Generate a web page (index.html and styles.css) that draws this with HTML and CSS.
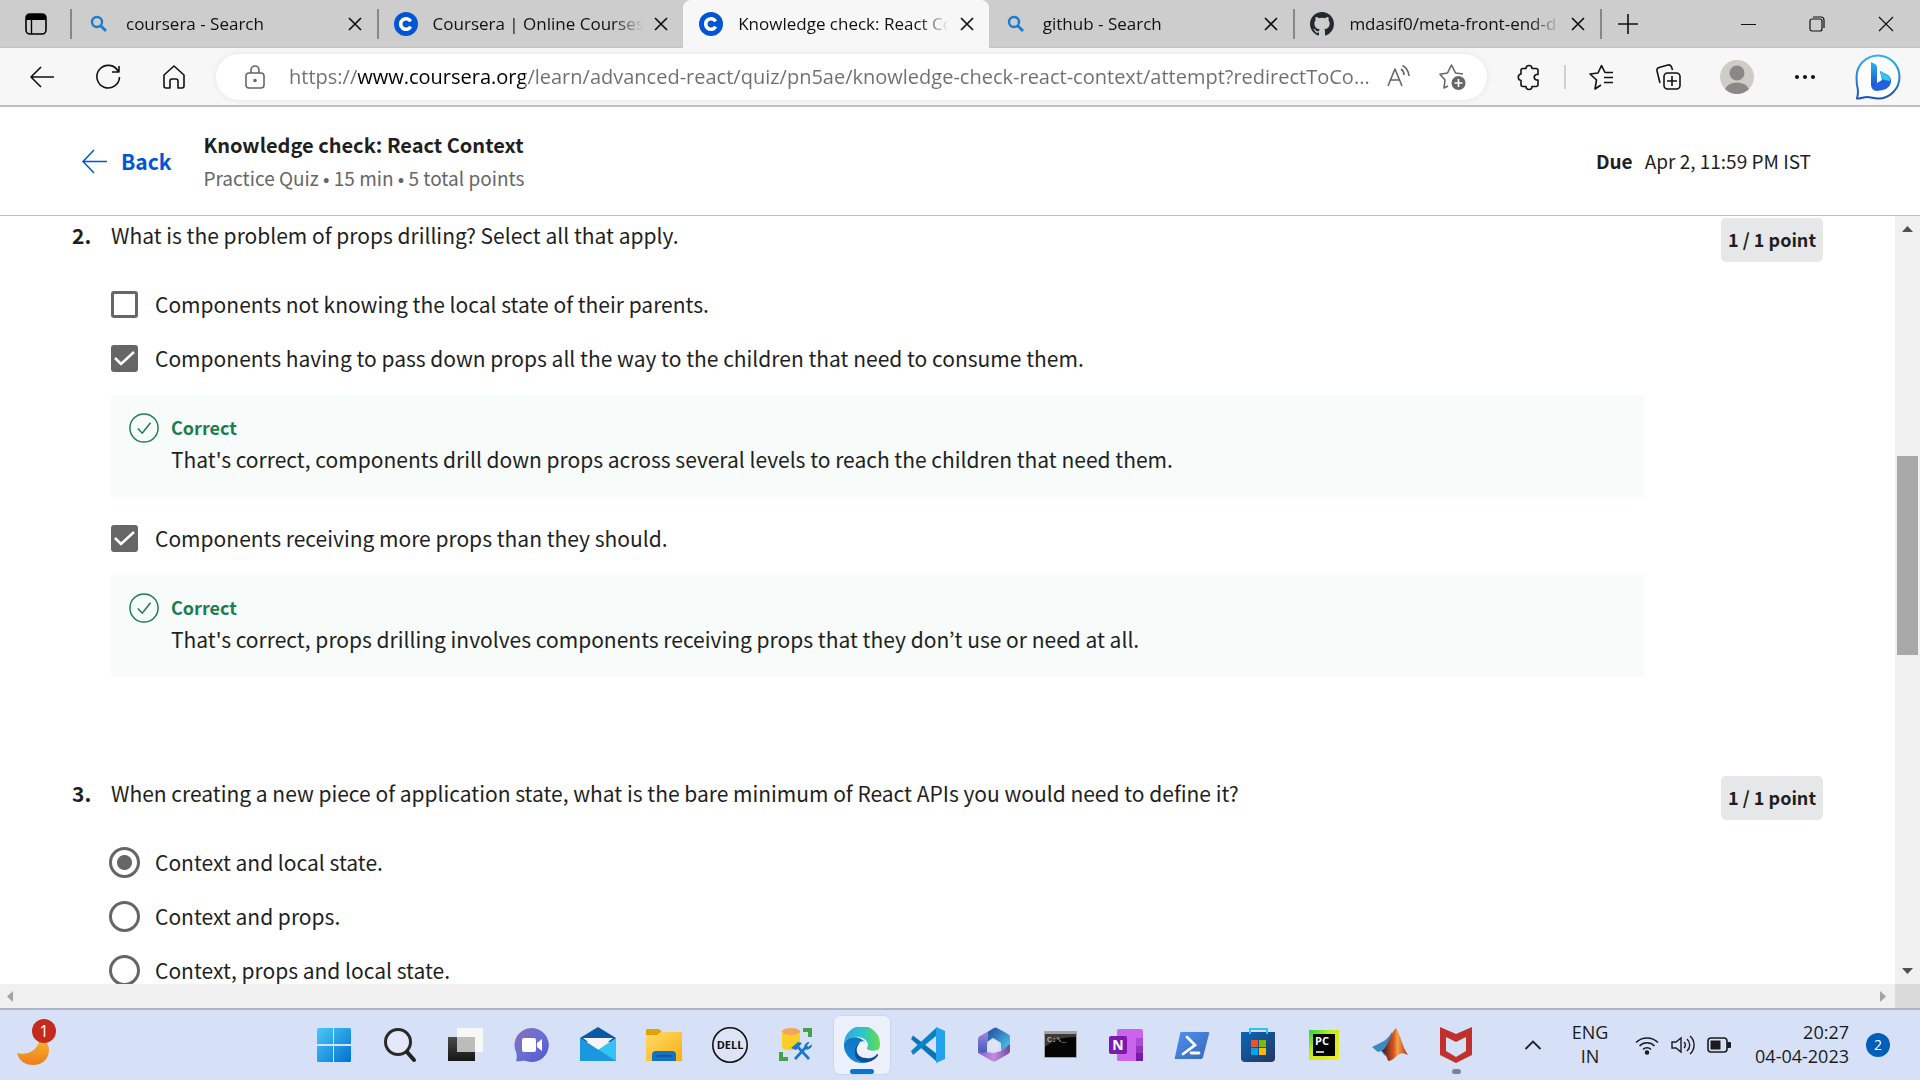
FILE: index.html
```html
<!DOCTYPE html>
<html lang="en">
<head>
<meta charset="utf-8">
<title>Knowledge check: React Context</title>
<link rel="stylesheet" href="styles.css">
</head>
<body>
<svg class="defs" aria-hidden="true">
  <defs>
    <symbol id="close" viewBox="0 0 14 14"><path d="M1 1l12 12M13 1L1 13" fill="none" stroke="#111" stroke-width="1.7"/></symbol>
    <symbol id="lens" viewBox="0 0 18 18"><circle cx="7" cy="7" r="5" fill="none" stroke="#1b7cd0" stroke-width="2.4"/><path d="M10.5 10.5L16 16" stroke="#1b7cd0" stroke-width="2.8"/></symbol>
    <symbol id="coursera" viewBox="0 0 24 24"><circle cx="12" cy="12" r="12" fill="#0056d2"/><path d="M16.6 9.4A5.3 5.3 0 1 0 16.6 14.6" fill="none" stroke="#fff" stroke-width="3.6"/></symbol>
    <symbol id="tick" viewBox="0 0 29 29"><circle cx="14.500" cy="14.500" r="13.600" fill="none" stroke="#1d7c50" stroke-width="1.400"/><path d="M8.500 15l4.300 4.500 8-10" fill="none" stroke="#1d7c50" stroke-width="1.500"/></symbol>
    <linearGradient id="gwin" x1="0" y1="0" x2="1" y2="1"><stop offset="0" stop-color="#4cc8fb"/><stop offset="1" stop-color="#0072cf"/></linearGradient>
    <linearGradient id="gmoon" x1="0" y1="0" x2="0" y2="1"><stop offset="0" stop-color="#f5b82e"/><stop offset="1" stop-color="#ef7d1a"/></linearGradient>
    <linearGradient id="gchat" x1="0" y1="0" x2="1" y2="1"><stop offset="0" stop-color="#8d6bb5"/><stop offset=".5" stop-color="#6a6fd6"/><stop offset="1" stop-color="#5058c8"/></linearGradient>
    <linearGradient id="gbing" x1="0" y1="0" x2="0" y2="1"><stop offset="0" stop-color="#2ab5ee"/><stop offset="1" stop-color="#1b50c8"/></linearGradient>
    <linearGradient id="gfold" x1="0" y1="0" x2="1" y2="1"><stop offset="0" stop-color="#ffdc6a"/><stop offset="1" stop-color="#f8ae10"/></linearGradient>
    <linearGradient id="gedge1" x1="0" y1="0" x2="1" y2="0"><stop offset="0" stop-color="#2da8e6"/><stop offset=".5" stop-color="#2cc4cc"/><stop offset="1" stop-color="#62dd4c"/></linearGradient>
    <linearGradient id="gedge2" x1="0" y1="0" x2="0" y2="1"><stop offset="0" stop-color="#1275c0"/><stop offset="1" stop-color="#0f8be0"/></linearGradient>
    <linearGradient id="gstore" x1="0" y1="0" x2="1" y2="1"><stop offset="0" stop-color="#0a67ba"/><stop offset="1" stop-color="#23375e"/></linearGradient>
    <linearGradient id="gpc" x1="0" y1="0" x2="1" y2="1"><stop offset="0" stop-color="#20d54c"/><stop offset=".4" stop-color="#c5e81c"/><stop offset="1" stop-color="#f2ea2a"/></linearGradient>
    <linearGradient id="gps" x1="0" y1="0" x2="1" y2="1"><stop offset="0" stop-color="#5190f5"/><stop offset="1" stop-color="#3567b8"/></linearGradient>
    <linearGradient id="gmat" x1="0" y1="0" x2="1" y2="0"><stop offset="0" stop-color="#3a1520"/><stop offset=".45" stop-color="#d9581e"/><stop offset=".6" stop-color="#f7a24c"/><stop offset="1" stop-color="#b0301c"/></linearGradient>
    <linearGradient id="gtask" x1="0" y1="0" x2="0" y2="1"><stop offset="0" stop-color="#4a4a4a"/><stop offset="1" stop-color="#151515"/></linearGradient>
    <linearGradient id="goff1" x1="0" y1="0" x2="0" y2="1"><stop offset="0" stop-color="#b98ae6"/><stop offset="1" stop-color="#2a56b0"/></linearGradient>
    <linearGradient id="goff2" x1="0" y1="0" x2="1" y2="1"><stop offset="0" stop-color="#1f4a9c"/><stop offset="1" stop-color="#4fd0f2"/></linearGradient>
    <linearGradient id="goff3" x1="0" y1="0" x2="1" y2="0"><stop offset="0" stop-color="#7f62c8"/><stop offset=".5" stop-color="#c88ae2"/><stop offset="1" stop-color="#6e4aa2"/></linearGradient>
  </defs>
</svg>

<header class="tabstrip">
  <button class="tab-menu" aria-label="Tab actions"><svg width="22" height="26" viewBox="0 0 22 26"><rect x="1" y="3" width="20" height="20" rx="4" fill="none" stroke="#000" stroke-width="1.600"/><path d="M1 9V7a4 4 0 0 1 4-4h12a4 4 0 0 1 4 4v2z"/><path d="M6.500 8v15" stroke="#000" stroke-width="1.400"/></svg></button>
  <nav class="tabs" aria-label="Tabs">
    <div class="tab"><svg class="fav"><use href="#lens" x="3" y="3" width="18" height="18"/></svg><a class="tab-title" href="#t1">coursera - Search</a><button class="tab-close" aria-label="Close tab"><svg><use href="#close"/></svg></button></div>
    <div class="tab"><svg class="fav"><use href="#coursera"/></svg><a class="tab-title" href="#t2">Coursera | Online Courses</a><button class="tab-close" aria-label="Close tab"><svg><use href="#close"/></svg></button></div>
    <div class="tab active"><svg class="fav"><use href="#coursera"/></svg><a class="tab-title" href="#t3">Knowledge check: React Context</a><button class="tab-close" aria-label="Close tab"><svg><use href="#close"/></svg></button></div>
    <div class="tab"><svg class="fav"><use href="#lens" x="3" y="3" width="18" height="18"/></svg><a class="tab-title" href="#t4">github - Search</a><button class="tab-close" aria-label="Close tab"><svg><use href="#close"/></svg></button></div>
    <div class="tab"><svg class="fav" viewBox="0 0 16 16"><path fill="#24292f" d="M8 0C3.580 0 0 3.580 0 8c0 3.540 2.290 6.530 5.470 7.590.4.070.550-.170.550-.380 0-.190-.010-.820-.010-1.490-2.010.370-2.530-.490-2.690-.940-.090-.230-.480-.940-.820-1.130-.280-.150-.680-.520-.010-.530.630-.010 1.080.580 1.230.820.720 1.210 1.870.870 2.330.660.070-.520.280-.870.510-1.070-1.780-.2-3.640-.890-3.640-3.950 0-.870.310-1.590.820-2.150-.080-.2-.360-1.020.080-2.120 0 0 .670-.210 2.200.820a7.600 7.600 0 0 1 4 0c1.530-1.040 2.200-.820 2.200-.820.440 1.100.160 1.920.080 2.120.510.560.820 1.270.820 2.150 0 3.070-1.870 3.750-3.650 3.950.290.250.540.730.540 1.480 0 1.070-.010 1.930-.010 2.200 0 .210.150.460.550.380A8 8 0 0 0 16 8c0-4.420-3.580-8-8-8z"/></svg><a class="tab-title" href="#t5">mdasif0/meta-front-end-d</a><button class="tab-close" aria-label="Close tab"><svg><use href="#close"/></svg></button></div>
  </nav>
  <button class="new-tab" aria-label="New tab"><svg width="22" height="22" viewBox="0 0 22 22"><path d="M11 1v20M1 11h20" stroke="#111" stroke-width="1.600"/></svg></button>
  <div class="window-buttons">
    <button aria-label="Minimize"><svg width="16" height="16" viewBox="0 0 16 16"><path d="M1 8.500h15" stroke="#111"/></svg></button>
    <button aria-label="Restore"><svg width="16" height="16" viewBox="0 0 16 16" fill="none" stroke="#111" stroke-width="1.200"><rect x="1" y="3" width="12" height="12" rx="2"/><path d="M4 1h8a3 3 0 0 1 3 3v8"/></svg></button>
    <button aria-label="Close"><svg width="16" height="16" viewBox="0 0 16 16"><path d="M1 1l14 14M15 1L1 15" stroke="#111" stroke-width="1.200"/></svg></button>
  </div>
</header>

<div class="toolbar">
  <div class="nav-buttons">
    <button aria-label="Go back"><svg width="28" height="28" viewBox="0 0 28 28"><path d="M26 14H3M13 4L3 14l10 10"/></svg></button>
    <button aria-label="Refresh"><svg width="28" height="28" viewBox="0 0 28 28"><path d="M24 8A11.300 11.300 0 1 0 25.500 14M25 3v6h-7"/></svg></button>
    <button aria-label="Home"><svg width="28" height="28" viewBox="0 0 28 28"><path d="M14 3L4 12v11a2 2 0 0 0 2 2h4v-7a2 2 0 0 1 2-2h4a2 2 0 0 1 2 2v7h4a2 2 0 0 0 2-2V12z"/></svg></button>
  </div>
  <form class="omnibox">
    <button type="button" aria-label="Site information"><svg width="24" height="28" viewBox="0 0 24 28" class="gray"><rect x="3" y="10" width="18" height="15" rx="3"/><path d="M8 10V7a4 4 0 0 1 8 0v3"/><circle cx="12" cy="17.500" r="1" fill="#666"/></svg></button>
    <input class="url" type="text" aria-label="Address bar" value="https://www.coursera.org/learn/advanced-react/quiz/pn5ae/knowledge-check-react-context/attempt?redirectToCo...">
    <button type="button" aria-label="Read aloud"><svg width="28" height="28" viewBox="0 0 28 28" class="gray"><path d="M4 23L11 6l7 17M6.500 17h9"/><path d="M17 6a7 7 0 0 1 3 6M18.500 2.500A13 13 0 0 1 25 13"/></svg></button>
    <button type="button" aria-label="Add to favorites"><svg width="30" height="30" viewBox="0 0 30 30" class="gray"><path d="M11 24l-4 2 1-8-5-5.800 7.500-1.200 4-8 4 8 7.500 1"/><circle cx="21.500" cy="21" r="7" fill="#666" stroke="none"/><path d="M21.500 17v8M17.500 21h8" stroke="#fff"/></svg></button>
  </form>
  <div class="tools">
    <button aria-label="Extensions"><svg width="28" height="28" viewBox="0 0 28 28"><path d="M8 5.500h3a3 3 0 0 1 6 0h4a2 2 0 0 1 2 2v4h-1.500a2.800 2.800 0 0 0 0 5.500H23v4.500a2 2 0 0 1-2 2h-4a3 3 0 0 1-6 0H8a2 2 0 0 1-2-2v-4a3.300 3.300 0 0 1 0-6.500V7.500a2 2 0 0 1 2-2z"/></svg></button>
    <span class="divider"></span>
    <button aria-label="Favorites"><svg width="28" height="28" viewBox="0 0 28 28"><path d="M14 22l-6 4 1.500-9L3 11l8-1 3.500-7.500L18 9.500h8M17 14.500h9M17 19.500h9"/></svg></button>
    <button aria-label="Collections"><svg width="28" height="28" viewBox="0 0 28 28"><rect x="9" y="10" width="16" height="16" rx="3.500"/><path d="M17 13v10M12 18h10M5 20L2 8a3 3 0 0 1 2-3.500L13 2a3 3 0 0 1 3.500 2l1 3"/></svg></button>
    <button aria-label="Profile"><svg width="34" height="34" viewBox="0 0 34 34" class="flat"><circle cx="17" cy="17" r="17" fill="#cfccc8"/><circle cx="17" cy="13" r="7.500" fill="#8b8784"/><path d="M5 29a12.500 9 0 0 1 24 0 17 17 0 0 1-24 0z" fill="#8b8784"/></svg></button>
    <button aria-label="Settings and more"><svg width="28" height="28" viewBox="0 0 28 28" class="flat"><circle cx="6" cy="14" r="2"/><circle cx="14" cy="14" r="2"/><circle cx="22" cy="14" r="2"/></svg></button>
    <button class="bing" aria-label="Bing chat"><svg width="46" height="48" viewBox="0 0 46 48" class="flat"><path d="M2 45.500c1-3 1-5 1-8-1-4-1.500-8-1.500-13.500A21.500 21.500 0 1 1 23 45.500c-4 0-7-1.500-11-1.500-4 0-6 2-10 1.500z" fill="#fff" stroke="url(#gbing)" stroke-width="2"/><path d="M16 9l4 2q2 1 2 3v16l-3 4q-3 0-3-3z" fill="url(#gbing)"/><path d="M22 30l5-3-2-9 8 4q3 2 3 6c0 5-4 8-8 9l-6 1c-4 0-6-3-6-7 2 3 4 1 6-1z" fill="#2261dc"/><path d="M25 18l7 4q4 2 3 6l-6-1q-2-1-3-4z" fill="#31c5ef"/></svg></button>
  </div>
</div>

<header class="quiz-header">
  <a class="back" href="#course"><svg width="27" height="27" viewBox="0 0 27 27"><path d="M26 13.500H2M13 2L2 13.500 13 25" fill="none" stroke="#0056d2" stroke-width="1.500"/></svg>Back</a>
  <div class="quiz-title">
    <h1>Knowledge check: React Context</h1>
    <p>Practice Quiz • 15 min • 5 total points</p>
  </div>
  <p class="due"><strong>Due</strong><span>Apr 2, 11:59 PM IST</span></p>
</header>

<div class="viewport">
  <main class="quiz">
    <section class="question">
      <span class="number">2.</span>
      <fieldset>
        <legend>What is the problem of props drilling? Select all that apply.</legend>
        <label class="option"><input type="checkbox">Components not knowing the local state of their parents.</label>
        <label class="option"><input type="checkbox" checked>Components having to pass down props all the way to the children that need to consume them.</label>
        <div class="feedback"><svg><use href="#tick"/></svg><div><strong>Correct</strong><p>That's correct, components drill down props across several levels to reach the children that need them.</p></div></div>
        <label class="option"><input type="checkbox" checked>Components receiving more props than they should.</label>
        <div class="feedback"><svg><use href="#tick"/></svg><div><strong>Correct</strong><p>That's correct, props drilling involves components receiving props that they don’t use or need at all.</p></div></div>
      </fieldset>
      <span class="points">1 / 1 point</span>
    </section>
    <section class="question">
      <span class="number">3.</span>
      <fieldset>
        <legend>When creating a new piece of application state, what is the bare minimum of React APIs you would need to define it?</legend>
        <label class="option"><input type="radio" name="q3" checked>Context and local state.</label>
        <label class="option"><input type="radio" name="q3">Context and props.</label>
        <label class="option"><input type="radio" name="q3">Context, props and local state.</label>
      </fieldset>
      <span class="points">1 / 1 point</span>
    </section>
  </main>
  <div class="scroll-y"><svg width="11" height="6"><path d="M0 6L5.500 0 11 6z" fill="#505050"/></svg><div class="track"><div class="thumb"></div></div><svg width="11" height="6"><path d="M0 0h11L5.500 6z" fill="#505050"/></svg></div>
</div>
<div class="scroll-x"><div class="bar"><svg width="6" height="11"><path d="M6 0v11L0 5.500z" fill="#a3a3a3"/></svg><svg width="6" height="11"><path d="M0 0v11l6-5.500z" fill="#a3a3a3"/></svg></div><div class="corner"></div></div>

<footer class="taskbar">
  <button class="weather" aria-label="Weather, 1 alert"><svg width="46" height="60" viewBox="0 0 46 60"><path d="M5 38c11 3 22-3 23-16 5 3 9 7 9 13 0 9-7 15-16 15-8 0-14-4-16-12z" fill="url(#gmoon)"/><circle cx="32" cy="16" r="12" fill="#c42b1c"/><text x="32" y="22" text-anchor="middle">1</text></svg></button>
  <nav class="apps" aria-label="Apps">
    <button aria-label="Start"><svg viewBox="0 0 36 36"><path fill="url(#gwin)" d="M2.500 1H17v16H1V2.500A1.500 1.500 0 0 1 2.500 1zM18 1h15.500A1.500 1.500 0 0 1 35 2.500V17H18zM1 19h16v16H2.500A1.500 1.500 0 0 1 1 33.500zM18 19h17v14.500a1.500 1.500 0 0 1-1.500 1.500H18z"/></svg></button>
    <button aria-label="Search"><svg viewBox="0 0 36 36"><circle cx="16" cy="15" r="12.500" fill="#e3e9f9" stroke="#2a2a2a" stroke-width="3"/><path d="M25 25l7 8" stroke="#222" stroke-width="4" stroke-linecap="round"/></svg></button>
    <button aria-label="Task view"><svg viewBox="0 0 36 36"><path d="M0 10h27v24H0z" fill="url(#gtask)"/><path d="M9 1h26v24H9z" fill="#f7f7f7"/><path d="M9 10h18v15H9z" fill="#bcbcbc"/></svg></button>
    <button aria-label="Chat"><svg viewBox="0 0 36 36"><path d="M18 1a17 17 0 1 1-6 33c-3-1-6 1-10 0 1-4 1-6 0-9A17 17 0 0 1 18 1z" fill="url(#gchat)"/><rect x="8" y="11" width="14" height="14" rx="2" fill="#fff"/><path d="M23 16l5-4v12l-5-4z" fill="#fff"/></svg></button>
    <button aria-label="Mail"><svg viewBox="0 0 36 36"><path d="M0 11L18 0l18 11v4H0z" fill="#0a59a5"/><path d="M3 11h30L18 23z" fill="#f5f5f5"/><path d="M0 11l18 12L36 11v23H0z" fill="#35c3f3"/><path d="M0 11l36 23H0z" fill="#1b97dd"/></svg></button>
    <button aria-label="File Explorer"><svg viewBox="0 0 36 36"><path d="M0 3a1 1 0 0 1 1-1h12l3 3h18v8H0z" fill="#e2a107"/><path d="M0 8h11l4-3h20a1 1 0 0 1 1 1v28H0z" fill="url(#gfold)"/><path d="M6 34v-6a4 4 0 0 1 4-4h16a4 4 0 0 1 4 4v6z" fill="#1272c3"/><path d="M11 29h14" stroke="#07519a" stroke-width="1.500"/></svg></button>
    <button aria-label="Dell"><svg viewBox="0 0 36 36"><circle cx="18" cy="18" r="17.200" fill="#dce4f6" stroke="#111" stroke-width="1.600"/><text class="dell" x="18" y="22" text-anchor="middle">DELL</text></svg></button>
    <button aria-label="Database tools"><svg viewBox="0 0 36 36"><path d="M4 4v17c3 3 15 3 18 0V4z" fill="#f7cf26"/><ellipse cx="13" cy="4.500" rx="9" ry="3.500" fill="#f2a65c"/><path d="M25 1h9v9h-4V5h-5zM1 25h4v5h5v4H1z" fill="#47a04b"/><path d="M13 21l7-6 4 1-6 7z" fill="#1877cc"/><path d="M19 19l12 13M17 32l11-12" stroke="#1877cc" stroke-width="2.600"/><path d="M31 15.500l-2.500 2.800 2 2 3-2.300a4.300 4.300 0 0 1-6.500 3.500A4.300 4.300 0 0 1 31 15.500z" fill="#1877cc" stroke="#1877cc"/></svg></button>
    <button class="current" aria-label="Microsoft Edge"><svg viewBox="0 0 36 36"><path d="M0 17A18 18 0 0 1 36 17c0 6-4 8-8 8-5 0-6-2-5-4 3-4-1-10-8-11C8 9 2 12 0 17z" fill="url(#gedge1)"/><path d="M0 17C3 8 18 8 22 17c-5-3-10 0-10 5 0 8 8 11 12 13A18 18 0 0 1 0 17z" fill="url(#gedge2)"/><path d="M17 16c-5 1-8 14 5 15 5 1 9-1 11-4 2 0 1 2-1 4-8 8-23 4-21-7 0-5 3-8 6-8z" fill="#114b96"/><path d="M16 15c3-2 7 0 7 4 0 2-1 2 0 3 2 2 7 2 10 1v3c-5 2-11 1-14-2-3-2-5-6-3-9z" fill="#edf2fb"/></svg></button>
    <button aria-label="Visual Studio Code"><svg viewBox="0 0 36 36"><path d="M3 8.500L27 27v8L1 12z" fill="#0a73b9"/><path d="M1 24L26 1v8L3 28z" fill="#0a82c8"/><path d="M26 0l9 4v28l-9 4z" fill="#23a0ee"/></svg></button>
    <button aria-label="Microsoft 365"><svg viewBox="0 0 36 36"><path d="M18 1L4 9q-2 1-2 3v14l9 4V17q0-3 3-4z" fill="url(#goff1)"/><path d="M18 1l-6 4v9l5-3 8 5v8l7-4q2-1 2-3v-7q0-2-2-3L21 1q-1-1-3 0z" fill="url(#goff2)"/><path d="M2 24q0 2 2 3l12 7q2 1 4 0l12-7q2-1 2-3v-7l-9 7-7 2-8-1-3 1z" fill="url(#goff3)"/><path d="M18 12l5 3v6l-5 3-5-3v-6z" fill="#dce4f7"/></svg></button>
    <button aria-label="Command Prompt"><svg viewBox="0 0 36 36"><rect x="2" y="4" width="33" height="27" rx="1" fill="#a3a3a3"/><path d="M3 7h31v23H3z" fill="#050505"/><path d="M3 7h31v3c-16 0-23 4-31 10z" fill="#3c3c3c"/><text class="cmd" x="5" y="15">C:\_</text></svg></button>
    <button aria-label="OneNote"><svg viewBox="0 0 36 36"><rect x="9" y="2" width="26" height="32" rx="2" fill="#ca64ea"/><path d="M28 11h7v8h-7z" fill="#ae4bd5"/><path d="M28 19h7v7h-7z" fill="#9332bf"/><path d="M28 26h7v8h-7z" fill="#7719aa"/><rect x="1" y="9" width="18" height="18" rx="2" fill="#7a1bad"/><text class="note" x="10" y="23" text-anchor="middle">N</text></svg></button>
    <button aria-label="PowerShell"><svg viewBox="0 0 36 36"><path d="M7 5h27q2 0 1 2l-6 23q0 2-2 2H2q-2 0-1-2L6 7q0-2 1-2z" fill="url(#gps)"/><path d="M13 10l8 8-12 9M17 26h8" fill="none" stroke="#fff" stroke-width="2.800" stroke-linecap="round"/></svg></button>
    <button aria-label="Microsoft Store"><svg viewBox="0 0 36 36"><path d="M1 5h34v26a4 4 0 0 1-4 4H5a4 4 0 0 1-4-4z" fill="url(#gstore)"/><path d="M10 7V2h17v5" fill="none" stroke="#2cc5f5" stroke-width="2"/><path d="M11 13h7v7h-7z" fill="#f25022"/><path d="M19 13h7v7h-7z" fill="#7fba00"/><path d="M11 21h7v7h-7z" fill="#00a4ef"/><path d="M19 21h7v7h-7z" fill="#ffb900"/></svg></button>
    <button aria-label="PyCharm"><svg viewBox="0 0 36 36"><rect x="3" y="3" width="30" height="30" fill="url(#gpc)"/><path d="M7 7h22v22H7z"/><text class="pc" x="9" y="18">PC</text><path d="M10 25h8" stroke="#fff" stroke-width="1.500"/></svg></button>
    <button aria-label="MATLAB"><svg viewBox="0 0 36 36"><path d="M0 20l12-6c3-2 6-6 8-9l2 11-9 13-4-5-3 1z" fill="#3c8ac1"/><path d="M10 24c6-4 9-19 14-23 4 6 7 20 12 27-5-2-7-3-11 1-3 2-5 5-9 5-1-4-3-8-6-10z" fill="url(#gmat)"/></svg></button>
    <button class="running" aria-label="McAfee"><svg viewBox="0 0 36 36"><path d="M2 0l16 7L34 0v28l-16 8-16-8zM8 10v14l10 6 10-6V10l-10 5z" fill="#c0302c" fill-rule="evenodd"/></svg></button>
  </nav>
  <div class="tray">
    <button class="chevron" aria-label="Show hidden icons"><svg width="18" height="12" viewBox="0 0 18 12"><path d="M1.500 10L9 2.500l7.500 7.500" fill="none" stroke="#222" stroke-width="1.800"/></svg></button>
    <button class="lang">ENG<br>IN</button>
    <button class="status" aria-label="Network, volume and battery">
      <svg width="24" height="22" viewBox="0 0 24 22" fill="none" stroke="#1b1b1b" stroke-width="1.500"><path d="M1 8.500a15.500 15.500 0 0 1 22 0M4.500 12a10.500 10.500 0 0 1 15 0M8 15.500a5.700 5.700 0 0 1 8 0"/><circle cx="12" cy="18.500" r="1.500" fill="#1b1b1b"/></svg>
      <svg width="24" height="22" viewBox="0 0 24 22" fill="none" stroke="#1b1b1b" stroke-width="1.400"><path d="M1 8v6h4l5 4V4L5 8zM13 8a4 4 0 0 1 0 6M16 5a8 8 0 0 1 0 12M19 2a12 12 0 0 1 0 18"/></svg>
      <svg width="24" height="22" viewBox="0 0 24 22"><rect x="1" y="4" width="19" height="14" rx="3" fill="none" stroke="#1b1b1b" stroke-width="1.600"/><path d="M3.500 6.500h10v9h-10zM20 8h3a1 1 0 0 1 1 1v4a1 1 0 0 1-1 1h-3z" fill="#1b1b1b"/></svg>
    </button>
    <button class="clock">20:27<br>04-04-2023</button>
    <button class="notices" aria-label="2 notifications">2</button>
  </div>
</footer>
</body>
</html>
```
FILE: styles.css
```css
* { box-sizing: border-box; }
body {
  margin: 0;
  height: 100vh;
  display: flex;
  flex-direction: column;
  overflow: hidden;
  background: #fff;
  color: #1f1f1f;
  font-family: "Noto Sans CJK KR", "Open Sans", sans-serif;
}
h1, p { margin: 0; }
button {
  display: flex;
  align-items: center;
  justify-content: center;
  flex: none;
  padding: 0;
  border: 0;
  background: none;
  color: inherit;
  font: inherit;
}
svg { display: block; flex: none; }
.defs { position: absolute; width: 0; height: 0; }

/* Tab strip */
.tabstrip, .toolbar, .taskbar { font-family: "Open Sans", sans-serif; }
.tabstrip { display: flex; height: 48px; flex: none; background: #cdcdcd; box-shadow: inset 0 -1px #c2c2c2; }
.tab-menu { width: 70px; padding-left: 2px; }
.tabs { display: flex; flex: 0 1 1532px; min-width: 0; height: 30px; margin-top: 9px; border-left: 2px solid #888; }
.tab { display: flex; align-items: center; flex: 1 1 0; min-width: 0; padding: 0 12px 0 15px; border-right: 2px solid #888; }
.tab.active {
  height: 48px;
  margin-top: -9px;
  padding-left: 16px;
  background: #f7f7f7;
  border-right: 0;
  border-radius: 8px 8px 0 0;
}
.tab:has(+ .active) { border-right: 0; }
.fav { width: 24px; height: 24px; }
.tab-title {
  flex: 1;
  min-width: 0;
  margin: 0 8px 0 15px;
  overflow: hidden;
  white-space: nowrap;
  color: #111;
  font-size: 17px;
  line-height: 24px;
  text-decoration: none;
  -webkit-mask-image: linear-gradient(90deg, #000 calc(100% - 30px), transparent);
  mask-image: linear-gradient(90deg, #000 calc(100% - 30px), transparent);
}
.tab-close { width: 20px; height: 24px; }
.tab-close svg { width: 14px; height: 14px; }
.new-tab { width: 52px; }
.window-buttons { display: flex; margin-left: auto; }
.window-buttons button { width: 69px; }

/* Toolbar */
.toolbar { display: flex; align-items: center; height: 59px; flex: none; padding: 0 8px 0 9px; background: #f7f7f7; border-bottom: 2px solid #bfbfbf; }
.toolbar svg { fill: none; stroke: #111; stroke-width: 1.6; stroke-linejoin: round; }
.toolbar svg.gray { stroke: #666; }
.toolbar svg.flat { fill: #111; stroke: none; }
.nav-buttons { display: flex; }
.nav-buttons button { width: 66px; height: 46px; }
.omnibox { display: flex; align-items: center; flex: 1; min-width: 0; height: 46px; margin-left: 9px; padding: 0 8px 0 12px; background: #fff; border-radius: 23px; box-shadow: 0 0 6px #e4e4e4; }
.omnibox button { width: 54px; }
.url {
  flex: 1;
  min-width: 0;
  padding: 0 0 0 7px;
  border: 0;
  outline: 0;
  font: 20px/30px "Open Sans", sans-serif;
  color: transparent;
  background: linear-gradient(90deg, #6e6e6e 76px, #000 76px, #000 243px, #6e6e6e 243px) text;
  -webkit-background-clip: text;
}
.tools { display: flex; align-items: center; margin-left: 8px; }
.tools button { width: 68px; height: 46px; }
.tools .bing { margin-left: 5px; }
.divider { width: 2px; height: 24px; margin: 0 1px; background: #cfcfcf; }

/* Quiz header */
.quiz-header { display: flex; align-items: center; height: 109px; flex: none; padding: 0 109px 0 81px; border-bottom: 1px solid #bdbdbd; }
.back { display: flex; align-items: center; gap: 13px; margin-right: 32px; color: #0056d2; font-size: 21px; line-height: 28px; font-weight: 700; text-decoration: none; }
.quiz-title h1 { font-size: 20px; line-height: 33px; font-weight: 700; }
.quiz-title p { color: #666; font-size: 19px; line-height: 33px; }
.due { display: flex; gap: 12px; margin-left: auto; font-size: 19px; line-height: 28px; }

/* Scrolled quiz */
.viewport { display: flex; flex: 1; min-height: 0; }
.quiz { flex: 1; min-width: 0; overflow: hidden; padding: 2px 72px 0; }
.question { display: flex; align-items: flex-start; min-height: 558px; font-size: 21px; line-height: 34px; }
.number { width: 39px; flex: none; font-weight: 700; }
fieldset { flex: 1; min-width: 0; margin: 0 77px 0 0; padding: 0; border: 0; }
legend { padding: 0; margin-bottom: 25px; }
.option { display: flex; align-items: center; height: 54px; }
.option input { appearance: none; flex: none; width: 27px; height: 27px; margin: 0 17px 0 0; border: 3px solid #666; border-radius: 3px; }
.option input[type="checkbox"]:checked { background: #666 url("data:image/svg+xml,%3Csvg xmlns='http://www.w3.org/2000/svg' viewBox='0 0 21 21'%3E%3Cpath d='M1 10l6 6L20 4' fill='none' stroke='white' stroke-width='2.5'/%3E%3C/svg%3E"); }
.option input[type="radio"] { width: 31px; height: 31px; margin: 0 15px 0 -2px; border-radius: 50%; }
.option input[type="radio"]:checked { background: radial-gradient(circle, #666 7px, transparent 8px); }
.feedback { display: flex; gap: 12px; height: 102px; margin: 10px 0 14px; padding: 18px; background: #f7fbf9; }
.feedback svg { width: 30px; height: 30px; }
.feedback strong { display: block; color: #1d7c50; font-size: 18px; line-height: 29px; }
.points { flex: none; height: 44px; padding: 0 7px; border-radius: 5px; background: #e5e7e8; font-size: 18px; line-height: 42px; font-weight: 700; }
.scroll-y { display: flex; flex-direction: column; align-items: center; width: 25px; flex: none; padding: 10px 0; background: #f0f0f0; }
.track { flex: 1; width: 100%; padding: 0 2px; display: flex; flex-direction: column; }
.track::before { content: ""; flex: 224; }
.track::after { content: ""; flex: 313; }
.thumb { flex: 199; background: #a8a8a8; }
.scroll-x { display: flex; height: 24px; flex: none; }
.bar { display: flex; flex: 1; align-items: center; justify-content: space-between; padding: 0 9px 0 7px; background: #f0f0f0; }
.corner { width: 25px; background: #dadada; }

/* Taskbar */
.taskbar { display: flex; align-items: center; justify-content: space-between; height: 72px; flex: none; padding: 0 30px 0 12px; background: #d6e0f7; border-top: 2px solid #adb5c7; color: #1b1b1b; font-size: 18px; line-height: 24px; }
.weather { width: 289px; justify-content: flex-start; }
.weather text { fill: #fff; font: 16px "Open Sans", sans-serif; }
.apps { display: flex; flex: 1; }
.apps button { position: relative; width: 56px; height: 58px; margin: 0 5px; }
.apps svg { width: 36px; height: 36px; }
.apps .current { background: #ebf0fb; border-radius: 6px; box-shadow: 0 0 1px 1px #cdd6eb; }
.current::after, .running::after { content: ""; position: absolute; bottom: 0; width: 24px; height: 5px; border-radius: 3px; background: #0078d4; }
.running::after { width: 9px; background: #7d8491; }
.pc { fill: #fff; font: 700 11px "Open Sans", sans-serif; }
.dell { fill: #111; font: 700 11px "Open Sans", sans-serif; }
.cmd { fill: #ddd; font: 8px "Liberation Mono", monospace; }
.note { fill: #fff; font: 700 14px "Open Sans", sans-serif; }
.tray { display: flex; align-items: center; }
.chevron { width: 46px; }
.lang { width: 68px; padding-bottom: 3px; }
.status { gap: 12px; width: 118px; }
.clock { width: 107px; padding-bottom: 3px; justify-content: flex-end; text-align: right; }
.notices { width: 24px; height: 24px; margin-left: 17px; border-radius: 50%; background: #005fb8; color: #fff; font-size: 14px; }
```
